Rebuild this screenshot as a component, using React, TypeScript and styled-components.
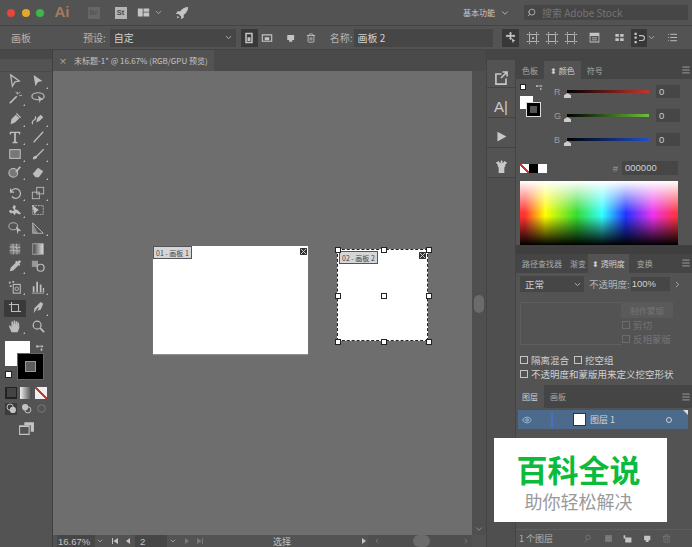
import React from 'react';
import styled, { createGlobalStyle } from 'styled-components';
import { ChevronDown, ChevronLeft, ChevronRight, Eye, Search, Trash2, List, Menu } from 'lucide-react';

const GlobalStyle = createGlobalStyle`
  html, body {
    margin: 0;
    padding: 0;
    background: #535353;
  }
  * {
    box-sizing: border-box;
  }
`;

const Window = styled.div`
  position: relative;
  width: 692px;
  height: 547px;
  overflow: hidden;
  display: flex;
  flex-direction: column;
  background: #535353;
  color: #c4c4c4;
  font-family: "Noto Sans CJK SC", "Liberation Sans", sans-serif;
  font-size: 9.5px;
`;

const TitleBar = styled.div`
  height: 26px;
  flex: none;
  display: flex;
  align-items: center;
  padding: 0 4px 0 7px;
  border-bottom: 1px solid #444;
`;

const Light = styled.span<{ color: string }>`
  width: 8px;
  height: 8px;
  margin-right: 6.5px;
  border-radius: 50%;
  background: ${props => props.color};
`;

const AiLogo = styled.span`
  width: 18px;
  margin: 0 15px 2px 4px;
  color: #a87a5e;
  font-family: "Liberation Sans", sans-serif;
  font-size: 15px;
  font-weight: bold;
`;

const AppBadge = styled.span<{ dim?: boolean; gap: number }>`
  width: 12px;
  height: 12px;
  margin-right: ${props => props.gap}px;
  display: flex;
  align-items: center;
  justify-content: center;
  background: ${props => props.dim ? '#666' : '#b4b4b4'};
  color: ${props => props.dim ? '#555' : '#4a4a4a'};
  font-family: "Liberation Sans", sans-serif;
  font-size: 7.5px;
  font-weight: bold;
`;

const Spring = styled.div`
  flex: 1;
`;

const WorkspaceLabel = styled.span`
  font-size: 8px;
  color: #c8c8c8;
  margin-right: 5px;
`;

const StockSearch = styled.div`
  width: 164px;
  height: 15px;
  margin-left: 14px;
  padding-left: 3px;
  display: flex;
  align-items: center;
  gap: 6px;
  background: #464646;
  color: #757575;
  font-size: 10px;
`;

const ControlBar = styled.div`
  height: 24px;
  flex: none;
  display: flex;
  align-items: center;
  padding: 0 8px 0 11px;
  border-bottom: 1px solid #444;
  background: #535353;
`;

const ControlLabel = styled.span<{ left?: number }>`
  margin-left: ${props => props.left || 0}px;
  font-size: 10px;
  color: #b4b4b4;
  white-space: nowrap;
`;

const FieldBox = styled.div<{ width: number; left?: number }>`
  width: ${props => props.width}px;
  height: 18px;
  margin-left: ${props => props.left || 0}px;
  padding: 0 3px 0 4px;
  display: flex;
  align-items: center;
  justify-content: space-between;
  background: #464646;
  color: #d4d4d4;
  font-size: 10px;
`;

const IconButton = styled.span<{ active?: boolean; width?: number; left?: number }>`
  width: ${props => props.width || 17}px;
  height: 18px;
  margin-left: ${props => props.left || 0}px;
  flex: none;
  display: flex;
  align-items: center;
  justify-content: center;
  background: ${props => props.active ? '#383838' : 'transparent'};
  color: #c4c4c4;
`;

const Body = styled.div`
  flex: 1;
  min-height: 0;
  display: flex;
`;

const ToolPanel = styled.div`
  width: 53px;
  flex: none;
  display: flex;
  flex-direction: column;
  border-right: 1px solid #3f3f3f;
`;

const PanelHandle = styled.div`
  height: 22px;
  flex: none;
  background: linear-gradient(#484848 0 9px, transparent 9px);
  border-bottom: 1px solid #4a4a4a;
`;

const ToolGroups = styled.div`
  display: flex;
  flex-direction: column;
  gap: 3.5px;
  padding: 0 4px 0 4px;
`;

const ToolGroup = styled.div`
  display: grid;
  grid-template-columns: 22px 23px;
  grid-auto-rows: 17.5px;
`;

const ToolCell = styled.span<{ active?: boolean }>`
  position: relative;
  display: flex;
  align-items: center;
  justify-content: center;
  background: ${props => props.active ? '#3a3a3a' : 'transparent'};
  color: #bdbdbd;
`;

const Corner = styled.i`
  position: absolute;
  right: 1px;
  bottom: 1px;
  border-left: 2px solid transparent;
  border-bottom: 2px solid #bbb;
`;

const ProxyArea = styled.div`
  position: relative;
  height: 45.5px;
  margin-top: 6.5px;
`;

const FillProxy = styled.div`
  position: absolute;
  left: 5px;
  top: 0;
  width: 25px;
  height: 25px;
  background: #fff;
`;

const StrokeProxy = styled.div`
  position: absolute;
  left: 18px;
  top: 13px;
  width: 25px;
  height: 25px;
  border: 7px solid #000;
  outline: 1px solid #666;
  background: #5d5d5d;
  box-shadow: inset 0 0 0 1px #999;
`;

const MiniProxy = styled.div`
  position: absolute;
  left: 5px;
  top: 30px;
  width: 7px;
  height: 7px;
  background: #fff;
  border: 1px solid #222;
`;

const SwapMark = styled.span`
  position: absolute;
  left: 35px;
  top: 1px;
  color: #bbb;
`;

const ModeRow = styled.div<{ top?: number }>`
  display: flex;
  gap: 3px;
  padding-left: 5px;
  margin-top: ${props => props.top || 0}px;
`;

const ModeCell = styled.span<{ active?: boolean; fill?: string }>`
  width: 12px;
  height: 12px;
  display: flex;
  align-items: center;
  justify-content: center;
  background: ${props => props.fill || (props.active ? '#3b3b3b' : 'transparent')};
`;

const ScreenMode = styled.div`
  display: flex;
  justify-content: center;
  margin-top: 5.5px;
`;

const DocumentColumn = styled.div`
  width: 433px;
  flex: none;
  display: flex;
  flex-direction: column;
`;

const TabStrip = styled.div`
  height: 21px;
  flex: none;
  background: #4a4a4a;
`;

const DocumentTab = styled.div`
  width: 161px;
  height: 21px;
  padding-left: 6px;
  display: flex;
  align-items: center;
  gap: 7px;
  background: #535353;
  color: #c4c4c4;
  font-size: 8px;
  white-space: nowrap;
`;

const CanvasRow = styled.div`
  flex: 1;
  min-height: 0;
  display: flex;
`;

const Canvas = styled.div`
  position: relative;
  flex: 1;
  background: #6e6e6e;
`;

const Artboard = styled.div<{ x: number; y: number; w: number; h: number; selected?: boolean }>`
  position: absolute;
  left: ${props => props.x}px;
  top: ${props => props.y}px;
  width: ${props => props.w}px;
  height: ${props => props.h}px;
  background: #fff;
  border: ${props => props.selected ? '1px dashed #222' : 'none'};
  box-shadow: ${props => props.selected ? 'none' : '0 1px 1px #8f8f8f'};
`;

const BoardLabel = styled.span<{ left: number; top: number }>`
  position: absolute;
  left: ${props => props.left}px;
  top: ${props => props.top}px;
  height: 13px;
  padding: 0 2px;
  display: flex;
  align-items: center;
  background: #d6d6d6;
  border: 1px solid #555;
  color: #444;
  font-size: 7px;
  white-space: nowrap;
`;

const BoardClose = styled.span<{ right: number; top: number }>`
  position: absolute;
  right: ${props => props.right}px;
  top: ${props => props.top}px;
  width: 7px;
  height: 7px;
  background: #333;
  display: flex;
`;

const Handle = styled.span<{ x: number; y: number }>`
  position: absolute;
  left: ${props => props.x}px;
  top: ${props => props.y}px;
  width: 6px;
  height: 6px;
  background: #fff;
  border: 1px solid #222;
`;

const VScroll = styled.div`
  position: relative;
  width: 14px;
  flex: none;
  background: #4f4f4f;
`;

const VThumb = styled.div`
  position: absolute;
  left: 2px;
  top: 224px;
  width: 10px;
  height: 18px;
  border-radius: 5px;
  background: #6b6b6b;
`;

const VArrow = styled.span`
  position: absolute;
  left: 2px;
  bottom: 1px;
  color: #999;
  display: flex;
`;

const StatusBar = styled.div`
  height: 12px;
  flex: none;
  display: flex;
  align-items: center;
  background: #535353;
  color: #c4c4c4;
  font-size: 9.5px;
`;

const StatusZoom = styled.span`
  width: 38px;
  height: 12px;
  margin-left: 4px;
  padding-left: 1px;
  background: #464646;
  font-family: "Liberation Sans", sans-serif;
  line-height: 13px;
`;

const StatusPage = styled.span`
  width: 32px;
  height: 12px;
  padding-left: 5px;
  margin-left: 3px;
  background: #464646;
  font-family: "Liberation Sans", sans-serif;
  line-height: 13px;
`;

const StatusIcon = styled.span<{ left: number }>`
  margin-left: ${props => props.left}px;
  display: flex;
  flex: none;
`;

const StatusText = styled.span`
  flex: 1;
  text-align: center;
  font-size: 9px;
`;

const HScroll = styled.div`
  position: relative;
  width: 104px;
  height: 12px;
  flex: none;
  display: flex;
  align-items: center;
  justify-content: space-between;
  padding: 0 2px 0 5px;
  background: #4f4f4f;
  color: #8a8a8a;
`;

const HThumb = styled.span`
  position: absolute;
  left: 45px;
  top: 0;
  width: 17px;
  height: 12px;
  border-radius: 6px;
  background: #6b6b6b;
`;

const StatusEnd = styled.div`
  width: 14px;
  flex: none;
`;

const Dock = styled.div`
  width: 30px;
  flex: none;
  display: flex;
  flex-direction: column;
  background: #4f4f4f;
  border-left: 1px solid #444;
  border-right: 1px solid #444;
`;

const DockHandle = styled.div`
  height: 10px;
  background: #454545;
`;

const DockCell = styled.div<{ h: number }>`
  height: ${props => props.h}px;
  padding-top: 7px;
  display: flex;
  align-items: center;
  justify-content: center;
  border-bottom: 1px solid #444;
  background: #535353;
  color: #c8c8c8;
`;

const DockText = styled.span`
  font-family: "Liberation Sans", sans-serif;
  font-size: 15px;
  color: #ccc;
`;

const SidePanels = styled.div`
  width: 176px;
  flex: none;
  display: flex;
  flex-direction: column;
  background: #454545;
`;

const SideHandle = styled.div`
  height: 11px;
  flex: none;
  background: #454545;
`;

const TabsRow = styled.div<{ h?: number }>`
  position: relative;
  height: ${props => props.h || 19}px;
  flex: none;
  display: flex;
  align-items: stretch;
  background: #454545;
`;

const PanelTab = styled.span<{ active?: boolean; pad?: number }>`
  padding: 0 ${props => props.pad ?? 6}px;
  display: flex;
  align-items: center;
  background: ${props => props.active ? '#535353' : 'transparent'};
  color: ${props => props.active ? '#d0d0d0' : '#a8a8a8'};
  font-size: 8px;
  white-space: nowrap;
`;

const PanelMenu = styled.span<{ top?: number }>`
  position: absolute;
  right: 1px;
  top: ${props => props.top ?? 4}px;
  display: flex;
  color: #aaa;
`;

const ColorPanel = styled.div`
  height: 166px;
  flex: none;
  padding: 4px 14px 0 4px;
  background: #535353;
`;

const SliderArea = styled.div`
  height: 71px;
  display: flex;
`;

const ColorProxy = styled.div`
  position: relative;
  width: 30px;
  flex: none;
`;

const ColorFill = styled.div`
  position: absolute;
  left: 0;
  top: 13px;
  width: 13px;
  height: 13px;
  background: #fff;
`;

const ColorStroke = styled.div`
  position: absolute;
  left: 7px;
  top: 20px;
  width: 13px;
  height: 13px;
  border: 3px solid #000;
  outline: 1px solid #ddd;
  background: #555;
`;

const TinyProxy = styled.div`
  position: absolute;
  left: 0;
  top: 1px;
  width: 6px;
  height: 6px;
  background: #fff;
  border: 1px solid #222;
`;

const ColorSwap = styled.span`
  position: absolute;
  left: 15px;
  top: 1px;
  display: flex;
  color: #aaa;
`;

const SliderRows = styled.div`
  flex: 1;
  display: flex;
  flex-direction: column;
  gap: 11px;
  padding-top: 2px;
`;

const SliderRow = styled.div`
  height: 13px;
  display: flex;
  align-items: center;
`;

const ChannelLetter = styled.span`
  width: 17px;
  padding-left: 4px;
  color: #9c9c9c;
  font-family: "Liberation Sans", sans-serif;
  font-size: 9px;
`;

const SliderTrack = styled.div<{ to: string }>`
  position: relative;
  width: 82px;
  height: 3px;
  background: linear-gradient(to right, #000, ${props => props.to});
`;

const SliderThumb = styled.span`
  position: absolute;
  left: -3px;
  top: 3px;
  width: 7px;
  height: 5px;
  background: #ccc;
  clip-path: polygon(50% 0, 100% 45%, 100% 100%, 0 100%, 0 45%);
`;

const ValueBox = styled.span`
  width: 24px;
  height: 13px;
  margin-left: 7px;
  padding-left: 3px;
  background: #464646;
  color: #d0d0d0;
  font-family: "Liberation Sans", sans-serif;
  font-size: 9.5px;
  line-height: 13px;
`;

const HexRow = styled.div`
  height: 16px;
  margin-top: 6px;
  display: flex;
  align-items: center;
`;

const Swatch = styled.span<{ fill: string }>`
  width: 9px;
  height: 9px;
  display: block;
  background: ${props => props.fill};
`;

const HexLabel = styled.span`
  margin-left: auto;
  margin-right: 4px;
  color: #9c9c9c;
  font-family: "Liberation Sans", sans-serif;
`;

const HexInput = styled.span`
  width: 56px;
  height: 14px;
  padding-left: 3px;
  background: #464646;
  color: #d0d0d0;
  font-family: "Liberation Sans", sans-serif;
  font-size: 9.5px;
  line-height: 14px;
`;

const Spectrum = styled.div`
  height: 64px;
  margin-top: 5px;
  background:
    linear-gradient(to bottom, #fff 0%, rgba(255,255,255,0) 50%, rgba(0,0,0,0) 55%, #000 100%),
    linear-gradient(to right, #f33 3%, #ff0 16%, #3d3 36%, #3ff 52%, #23f 67%, #e3e 84%, #f33 100%);
`;

const PanelGap = styled.div<{ h: number }>`
  height: ${props => props.h}px;
  flex: none;
  background: #3f3f3f;
`;

const TransparencyPanel = styled.div`
  flex: none;
  height: 112px;
  padding: 3px 4px 0;
  background: #535353;
`;

const BlendRow = styled.div`
  height: 16px;
  display: flex;
  align-items: center;
  font-size: 9.5px;
`;

const BlendSelect = styled.span`
  width: 64px;
  height: 16px;
  padding: 0 2px 0 5px;
  display: flex;
  align-items: center;
  justify-content: space-between;
  background: #464646;
  color: #d0d0d0;
`;

const OpacityLabel = styled.span`
  margin-left: 5px;
  color: #b4b4b4;
  white-space: nowrap;
`;

const OpacityValue = styled.span`
  width: 39px;
  height: 14px;
  margin-left: 1px;
  padding-left: 1px;
  background: #464646;
  color: #d0d0d0;
  font-family: "Liberation Sans", sans-serif;
  line-height: 14px;
`;

const MaskArea = styled.div`
  height: 43px;
  margin-top: 10px;
  display: flex;
  justify-content: flex-end;
  border-top: 1px solid #5e5e5e;
  border-bottom: 1px solid #5e5e5e;
  border-left: 1px solid #5e5e5e;
  width: 102px;
  position: relative;
`;

const MaskColumn = styled.div`
  position: absolute;
  left: 100px;
  top: -1px;
  width: 52px;
  display: flex;
  flex-direction: column;
  color: #747474;
  font-size: 8.5px;
  white-space: nowrap;
`;

const MaskButton = styled.span`
  height: 16px;
  display: flex;
  align-items: center;
  justify-content: center;
  background: #5a5a5a;
`;

const CheckLine = styled.label<{ dim?: boolean }>`
  height: 14px;
  display: flex;
  align-items: center;
  gap: 3px;
  color: ${props => props.dim ? '#747474' : '#d0d0d0'};
  font-size: 9.5px;
  white-space: nowrap;
`;

const CheckBox = styled.i<{ dim?: boolean; left?: number }>`
  width: 8px;
  height: 8px;
  margin-left: ${props => props.left || 0}px;
  flex: none;
  border: 1px solid ${props => props.dim ? '#6c6c6c' : '#c4c4c4'};
`;

const CheckGroup = styled.div`
  padding-top: 8px;
`;

const LayersPanel = styled.div`
  flex: 1;
  min-height: 0;
  display: flex;
  flex-direction: column;
  background: #535353;
`;

const LayerRow = styled.div`
  position: relative;
  height: 19px;
  margin: 2px 4px 0 2px;
  display: flex;
  align-items: center;
  background: #4c6b8c;
  color: #d4d4d4;
  font-size: 9px;
`;

const LayerBar = styled.i`
  width: 2px;
  height: 14px;
  margin-left: 19px;
  background: #4a6fc4;
`;

const LayerThumb = styled.i`
  width: 13px;
  height: 13px;
  margin: 0 4px 0 20px;
  background: #fff;
  border: 1px solid #333;
`;

const LayerTarget = styled.i`
  width: 6px;
  height: 6px;
  margin-left: auto;
  margin-right: 16px;
  border: 1px solid #ccc;
  border-radius: 50%;
`;

const LayerCorner = styled.i`
  position: absolute;
  right: 0;
  top: 0;
  border-left: 5px solid transparent;
  border-top: 5px solid #ddd;
`;

const LayerFooter = styled.div`
  height: 18px;
  margin-top: auto;
  padding: 0 21px 0 3px;
  display: flex;
  align-items: center;
  justify-content: space-between;
  border-top: 1px solid #5e5e5e;
  color: #b4b4b4;
  font-size: 9px;
`;

const FooterIcons = styled.span`
  display: flex;
  align-items: center;
  gap: 10.5px;
  color: #c4c4c4;
`;

const Watermark = styled.div`
  position: absolute;
  left: 494px;
  top: 438px;
  width: 173px;
  height: 84px;
  padding-right: 4px;
  display: flex;
  flex-direction: column;
  align-items: center;
  background: #fff;
  font-family: "Liberation Sans", "Noto Sans CJK SC", sans-serif;
`;

const WatermarkTitle = styled.span`
  margin-top: 16px;
  color: #0dbb3c;
  font-size: 31px;
  font-weight: 700;
  line-height: 36px;
`;

const WatermarkSub = styled.span`
  margin-top: 2px;
  color: #9a9a9a;
  font-size: 18px;
  line-height: 22px;
`;

const Glyph: React.FC<{ size?: number; children: React.ReactNode; dim?: boolean }> = ({ size = 13, children, dim }) => (
  <svg width={size} height={size} viewBox="0 0 16 16" fill="currentColor" stroke="none" opacity={dim ? 0.35 : 1}>
    {children}
  </svg>
);

const line = { fill: 'none', stroke: 'currentColor', strokeWidth: 1.4 };

type ToolDef = { key: string; corner?: boolean; active?: boolean; art: React.ReactNode };

const toolGroups: ToolDef[][] = [
  [
    { key: 'select', art: <path d="M3 1l10 7-5 1 -3 5z" {...line} /> },
    { key: 'direct', corner: true, art: <path d="M3 1l10 7-5 1-3 5z" /> },
    { key: 'wand', corner: true, art: <><path d="M2 14l8-8" {...line} strokeWidth={2} /><path d="M11 1v3M13 5h3M9 1l1 2M14 1l-2 2" {...line} strokeWidth={1} /></> },
    { key: 'lasso', art: <><ellipse cx="8" cy="6" rx="7" ry="4" {...line} /><path d="M8 5l6 5-3 .5-1 3.500z" /></> },
  ],
  [
    { key: 'pen', corner: true, art: <path d="M3 14l1-6 5-5 4 4-5 5z M9 2l1-1 5 5-1 1z" /> },
    { key: 'curvature', corner: true, art: <><path d="M2 14c-3-6 5-3 3-9" {...line} /><path d="M6 12l1-5 4-4 3 3-4 4z" /></> },
    { key: 'type', corner: true, art: <path d="M2 2h12v3h-1l-1-1.500H9V13l2 1v1H5v-1l2-1V3.500H4L3 5H2z" /> },
    { key: 'line', corner: true, art: <path d="M3 14L14 2" {...line} /> },
    { key: 'rect', corner: true, art: <rect x="2" y="3" width="12" height="10" fill="#777" stroke="currentColor" strokeWidth="1.2" /> },
    { key: 'brush', corner: true, art: <path d="M2 14c0-3 2-4 4-4l8-8 1 1-8 8c0 2-2 3-5 3z" /> },
    { key: 'shaper', corner: true, art: <><circle cx="6" cy="9" r="5" fill="#777" stroke="currentColor" strokeWidth="1.2" /><path d="M9 8l5-6" {...line} strokeWidth={2} /></> },
    { key: 'eraser', corner: true, art: <path d="M2 10l6-7 6 4-5 7H5z" /> },
  ],
  [
    { key: 'rotate', corner: true, art: <path d="M3 3v4h4M3.500 7a5.500 5.500 0 1 1 1 5" {...line} /> },
    { key: 'scale', corner: true, art: <><rect x="1.500" y="7" width="8" height="7.500" {...line} strokeWidth={1} /><rect x="6.500" y="1.500" width="8" height="7.500" {...line} strokeWidth={1} /></> },
    { key: 'warp', corner: true, art: <path d="M1 9c3-3 4 2 6-1l-2-3 2-3 2 2-1 3 3 1 4 4-2 1-4-2-1 3-3-3-2 1z" /> },
    { key: 'free', art: <><rect x="2" y="3" width="12" height="10" {...line} strokeWidth={1} strokeDasharray="2 1" /><path d="M1 2l8 6-3 2-2 3z" /></> },
    { key: 'shape', corner: true, art: <><ellipse cx="6" cy="6" rx="5" ry="4" {...line} strokeWidth={1} /><path d="M9 6l6 5-3 .5-1 3.500z" /></> },
    { key: 'perspective', corner: true, art: <><path d="M2 2v12h12z" {...line} strokeWidth={1} /><path d="M2 2l6 12H2z" opacity=".5" /></> },
  ],
  [
    { key: 'mesh', art: <><rect x="2" y="2" width="12" height="12" fill="#777" /><path d="M2 6c4-2 8 2 12 0M2 10c4-2 8 2 12 0M6 2c-2 4 2 8 0 12M10 2c-2 4 2 8 0 12" {...line} strokeWidth={1} /></> },
    { key: 'gradient', art: <><defs><linearGradient id="gradientTool"><stop offset="0" stopColor="#444" /><stop offset="1" stopColor="#ddd" /></linearGradient></defs><rect x="2" y="2" width="12" height="12" fill="url(#gradientTool)" stroke="#aaa" strokeWidth="1" /></> },
    { key: 'eyedropper', corner: true, art: <path d="M2 14l1-4 6-6-1-1 2-1 1 1 2-2 2 2-2 2 1 1-1 2-1-1-6 6z" /> },
    { key: 'blend', art: <><rect x="1" y="2" width="7" height="7" fill="#999" /><circle cx="11" cy="10" r="4" {...line} /></> },
  ],
  [
    { key: 'symbol', corner: true, art: <><path d="M1 2h2v2H1zM5 1h2v2H5zM2 6h2v2H2z" /><rect x="6" y="5" width="8" height="10" {...line} strokeWidth={1.2} /><circle cx="10" cy="10" r="2" {...line} strokeWidth={1} /></> },
    { key: 'graph', corner: true, art: <path d="M2 14V7h2v7zM6 14V2h2v12zM10 14V5h2v9zM13.500 14v-5h1.500v5zM1 14.500h14v1H1z" /> },
  ],
  [
    { key: 'artboard', active: true, art: <><path d="M4 1v11h11M1 4h11v8" {...line} strokeWidth={1.2} /></> },
    { key: 'slice', corner: true, art: <path d="M3 14l1-6 7-7 3 2-3 7-4 1 2-3-1-1z" /> },
    { key: 'hand', corner: true, art: <path d="M4 15L1 8l1-1 2 2V3l1.500-.5L6.500 7V2L8 1.500 9 7V2.500l1.500 0L11 8V4l1.500 0 .5 6-2 5z" /> },
    { key: 'zoom', art: <><circle cx="7" cy="7" r="4.500" {...line} /><path d="M10.500 10.500L15 15" {...line} strokeWidth={2} /></> },
  ],
];

const artboardHandles = [
  [-3, -3], [43, -3], [88, -3],
  [-3, 43], [43, 43], [88, 43],
  [-3, 89], [43, 89], [88, 89],
];

const FrameIcon: React.FC<{ center?: boolean }> = ({ center }) => (
  <Glyph size={14}>
    <path d="M4 4h8v8H4zM1 4h2M13 4h2M1 12h2M13 12h2M4 1v2M12 1v2M4 13v2M12 13v2" {...line} strokeWidth={1} />
    {center && <path d="M7 7h2v2H7z" />}
  </Glyph>
);

export default function App() {
  return (
    <Window>
      <GlobalStyle />
      <TitleBar>
        <Light color="#e8443c" />
        <Light color="#e6a72a" />
        <Light color="#3fb54a" />
        <AiLogo>Ai</AiLogo>
        <AppBadge dim gap={15}>Br</AppBadge>
        <AppBadge gap={10}>St</AppBadge>
        <Glyph size={13}><path d="M1 3h6v10H1zM8 3h7v4H8zM8 8h7v5H8z" /></Glyph>
        <ChevronDown size={9} style={{ margin: '0 12px 0 4px' }} />
        <Glyph size={14}><path d="M15 1C11 1 8 3 6 6H3L1 9h3l3 3v3l3-2v-3c3-2 5-5 5-9zM3 11l2 2-3 1z" /></Glyph>
        <Spring />
        <WorkspaceLabel>基本功能</WorkspaceLabel>
        <ChevronDown size={10} />
        <StockSearch>
          <Search size={9} color="#c4c4c4" style={{ transform: 'scaleX(-1)' }} />
          搜索 Adobe Stock
        </StockSearch>
      </TitleBar>

      <ControlBar>
        <ControlLabel>画板</ControlLabel>
        <ControlLabel left={52}>预设:</ControlLabel>
        <FieldBox width={126} left={4}>
          自定
          <ChevronDown size={9} />
        </FieldBox>
        <IconButton active left={5}>
          <Glyph size={12}><path d="M3 1h10v14H3zM5 3v10h6V3z" fillRule="evenodd" /><path d="M6 7h4v5H6z" /></Glyph>
        </IconButton>
        <IconButton left={1}>
          <Glyph size={12}><path d="M1 3h14v10H1zM2.500 4.500v7h11v-7z" fillRule="evenodd" /><path d="M5 7h6v4H5z" /></Glyph>
        </IconButton>
        <IconButton left={7}>
          <Glyph size={10}><path d="M2 3h11v8h-3v3H5v-3H2z" /></Glyph>
        </IconButton>
        <IconButton left={3}><Trash2 size={10} /></IconButton>
        <ControlLabel left={10}>名称:</ControlLabel>
        <FieldBox width={139} left={1}>画板 2</FieldBox>
        <IconButton active left={9}>
          <Glyph size={13}><path d="M8 1l2 2H9v2h3V4l2 2-2 2V7H9v2h1L8 11 6 9h1V7H4v1L2 6l2-2v1h3V3H6z" /><path d="M9 9l5 3-2 .5-1 2.500z" /></Glyph>
        </IconButton>
        <IconButton left={6}><FrameIcon center /></IconButton>
        <IconButton left={2}><FrameIcon /></IconButton>
        <IconButton left={2}><FrameIcon /></IconButton>
        <IconButton left={6}>
          <Glyph size={13}><path d="M2 2h12v12H2zM3 6v7h10V6z" fillRule="evenodd" /><path d="M5 8h6v1H5zM5 10.500h6v1H5z" /></Glyph>
        </IconButton>
        <IconButton left={8}>
          <Glyph size={11}><path d="M2 3h5v4H2zM9 3h5v4H9zM2 9h5v4H2zM9 9h5v4H9z" /></Glyph>
        </IconButton>
        <IconButton active left={3} width={16}>
          <Glyph size={12}><path d="M2 1h3v3H2zM2 6h3v3H2zM2 12h3v3H2zM8 4h4a3 3 0 0 1 0 8H8v-1.500h4a1.500 1.500 0 0 0 0-5H8z" /></Glyph>
        </IconButton>
        <ChevronDown size={9} />
        <IconButton left={8}><List size={11} /></IconButton>
      </ControlBar>

      <Body>
        <ToolPanel>
          <PanelHandle />
          <ToolGroups>
            {toolGroups.map((group, i) => (
              <ToolGroup key={i}>
                {group.map(tool => (
                  <ToolCell key={tool.key} active={tool.active}>
                    <Glyph size={14}>{tool.art}</Glyph>
                    {tool.corner && <Corner />}
                  </ToolCell>
                ))}
              </ToolGroup>
            ))}
          </ToolGroups>
          <ProxyArea>
            <FillProxy />
            <StrokeProxy />
            <MiniProxy />
            <SwapMark>
              <Glyph size={9}><path d="M2 2h3v1h7l-1-1h2l2 2-2 2h-2l1-1H6v1H2zM10 8l3 0v4h-3z" /></Glyph>
            </SwapMark>
          </ProxyArea>
          <ModeRow>
            <ModeCell fill="#222"><Swatch fill="#444" /></ModeCell>
            <ModeCell fill="linear-gradient(to right, #eee, #444)" />
            <ModeCell fill="linear-gradient(to top right, #eee 42%, #c33 42% 58%, #eee 58%)" />
          </ModeRow>
          <ModeRow top={4}>
            <ModeCell active><Glyph size={11}><circle cx="6" cy="6" r="4.500" {...line} /><circle cx="10" cy="10" r="4.500" /></Glyph></ModeCell>
            <ModeCell><Glyph size={11}><circle cx="6" cy="6" r="4.500" /><circle cx="10" cy="10" r="4.500" {...line} /></Glyph></ModeCell>
            <ModeCell><Glyph size={11} dim><circle cx="8" cy="8" r="5.500" {...line} /></Glyph></ModeCell>
          </ModeRow>
          <ScreenMode>
            <Glyph size={17}><path d="M1 5h10v9H1zM2 6.500V13h8V6.500z" fillRule="evenodd" /><path d="M6 2h9v9h-3V5H6z" /></Glyph>
          </ScreenMode>
        </ToolPanel>

        <DocumentColumn>
          <TabStrip>
            <DocumentTab>
              <span>×</span>
              未标题-1* @ 16.67% (RGB/GPU 预览)
            </DocumentTab>
          </TabStrip>
          <CanvasRow>
            <Canvas>
              <Artboard x={100} y={175} w={155} h={108}>
                <BoardLabel left={0} top={0}>01 - 画板 1</BoardLabel>
                <BoardClose right={1} top={2}><Glyph size={7}><path d="M2 2l12 12M14 2L2 14" stroke="#ddd" strokeWidth="2" /></Glyph></BoardClose>
              </Artboard>
              <Artboard x={284} y={178} w={91} h={92} selected>
                <BoardLabel left={1} top={1}>02 - 画板 2</BoardLabel>
                <BoardClose right={1} top={2}><Glyph size={7}><path d="M2 2l12 12M14 2L2 14" stroke="#ddd" strokeWidth="2" /></Glyph></BoardClose>
                {artboardHandles.map(([x, y]) => (
                  <Handle key={`${x}-${y}`} x={x} y={y} />
                ))}
              </Artboard>
            </Canvas>
            <VScroll>
              <VThumb />
              <VArrow><ChevronDown size={10} /></VArrow>
            </VScroll>
          </CanvasRow>
          <StatusBar>
            <StatusZoom>16.67%</StatusZoom>
            <StatusIcon left={1}><ChevronDown size={8} /></StatusIcon>
            <StatusIcon left={7}><Glyph size={8}><path d="M2 2h2v12H2zM14 2v12L5 8z" /></Glyph></StatusIcon>
            <StatusIcon left={5}><Glyph size={8}><path d="M12 2v12L4 8z" /></Glyph></StatusIcon>
            <StatusPage>2</StatusPage>
            <StatusIcon left={2}><ChevronDown size={8} /></StatusIcon>
            <StatusIcon left={6}><Glyph size={8} dim><path d="M4 2v12l8-6z" /></Glyph></StatusIcon>
            <StatusIcon left={5}><Glyph size={8} dim><path d="M2 2v12l9-6zM12 2h2v12h-2z" /></Glyph></StatusIcon>
            <StatusText>选择</StatusText>
            <Glyph size={8}><path d="M4 2v12l8-6z" /></Glyph>
            <HScroll>
              <ChevronLeft size={8} />
              <HThumb />
              <ChevronRight size={8} />
            </HScroll>
            <StatusEnd />
          </StatusBar>
        </DocumentColumn>

        <Dock>
          <DockHandle />
          <DockCell h={28}>
            <Glyph size={17}><path d="M2 4h6v1.500H3.500v8h8V9H13v6H2z M9 2h5v5h-1.500V4.500L8 9 7 8l4.500-4.500H9z" /></Glyph>
          </DockCell>
          <DockCell h={30}><DockText>A|</DockText></DockCell>
          <DockCell h={30}><Glyph size={13}><path d="M3 2l11 6-11 6z" /></Glyph></DockCell>
          <DockCell h={30}>
            <Glyph size={15}><path d="M8 1l1.500 2-1 1H10l1-2 3 2-2 2v2l-1 1v6H5V9L4 8V6L2 4l3-2 1 2h1.500L7 3z" /></Glyph>
          </DockCell>
        </Dock>

        <SidePanels>
          <SideHandle />
          <TabsRow h={18}>
            <PanelTab>色板</PanelTab>
            <PanelTab active>⬍ 颜色</PanelTab>
            <PanelTab>符号</PanelTab>
            <PanelMenu><Menu size={10} /></PanelMenu>
          </TabsRow>
          <ColorPanel>
            <SliderArea>
              <ColorProxy>
                <TinyProxy />
                <ColorSwap>
                  <Glyph size={8}><path d="M2 2h3v1h7l-1-1h2l2 2-2 2h-2l1-1H6v1H2zM10 8l3 0v4h-3z" /></Glyph>
                </ColorSwap>
                <ColorFill />
                <ColorStroke />
              </ColorProxy>
              <SliderRows>
                <SliderRow>
                  <ChannelLetter>R</ChannelLetter>
                  <SliderTrack to="#c8342c"><SliderThumb /></SliderTrack>
                  <ValueBox>0</ValueBox>
                </SliderRow>
                <SliderRow>
                  <ChannelLetter>G</ChannelLetter>
                  <SliderTrack to="#6cc03c"><SliderThumb /></SliderTrack>
                  <ValueBox>0</ValueBox>
                </SliderRow>
                <SliderRow>
                  <ChannelLetter>B</ChannelLetter>
                  <SliderTrack to="#2050d0"><SliderThumb /></SliderTrack>
                  <ValueBox>0</ValueBox>
                </SliderRow>
              </SliderRows>
            </SliderArea>
            <HexRow>
              <Swatch fill="linear-gradient(to top right, #fff 42%, #c33 42% 58%, #fff 58%)" />
              <Swatch fill="#000" />
              <Swatch fill="#fff" />
              <HexLabel>#</HexLabel>
              <HexInput>000000</HexInput>
            </HexRow>
            <Spectrum />
          </ColorPanel>

          <PanelGap h={9} />
          <TabsRow>
            <PanelTab>路径查找器</PanelTab>
            <PanelTab pad={2}>渐变</PanelTab>
            <PanelTab active pad={4}>⬍ 透明度</PanelTab>
            <PanelTab pad={8}>变换</PanelTab>
            <PanelMenu><Menu size={10} /></PanelMenu>
          </TabsRow>
          <TransparencyPanel>
            <BlendRow>
              <BlendSelect>正常<ChevronDown size={9} /></BlendSelect>
              <OpacityLabel>不透明度:</OpacityLabel>
              <OpacityValue>100%</OpacityValue>
              <ChevronRight size={9} style={{ marginLeft: 3 }} />
            </BlendRow>
            <MaskArea>
              <MaskColumn>
                <MaskButton>制作蒙版</MaskButton>
                <CheckLine dim><CheckBox dim left={1} />剪切</CheckLine>
                <CheckLine dim><CheckBox dim left={1} />反相蒙版</CheckLine>
              </MaskColumn>
            </MaskArea>
            <CheckGroup>
              <CheckLine>
                <CheckBox />隔离混合
                <CheckBox left={2} />挖空组
              </CheckLine>
              <CheckLine>
                <CheckBox />不透明度和蒙版用来定义挖空形状
              </CheckLine>
            </CheckGroup>
          </TransparencyPanel>

          <TabsRow h={23}>
            <PanelTab active>图层</PanelTab>
            <PanelTab>画板</PanelTab>
            <PanelMenu top={7}><Menu size={10} /></PanelMenu>
          </TabsRow>
          <LayersPanel>
            <LayerRow>
              <Eye size={10} color="#a9c3dc" style={{ marginLeft: 4 }} />
              <LayerBar />
              <LayerThumb />
              图层 1
              <LayerTarget />
              <LayerCorner />
            </LayerRow>
            <LayerFooter>
              1 个图层
              <FooterIcons>
                <Glyph size={9} dim><circle cx="7" cy="6" r="4" {...line} /><path d="M5 10l-3 5" {...line} /></Glyph>
                <Glyph size={9} dim><path d="M2 2h12v12H2z" /></Glyph>
                <Glyph size={9}><path d="M1 2h3v4h11v9H4V8H1z" /></Glyph>
                <Glyph size={9}><path d="M2 3h11v8h-3v3H5v-3H2z" /></Glyph>
                <Trash2 size={9} opacity={0.35} />
              </FooterIcons>
            </LayerFooter>
          </LayersPanel>
        </SidePanels>
      </Body>

      <Watermark>
        <WatermarkTitle>百科全说</WatermarkTitle>
        <WatermarkSub>助你轻松解决</WatermarkSub>
      </Watermark>
    </Window>
  );
}
